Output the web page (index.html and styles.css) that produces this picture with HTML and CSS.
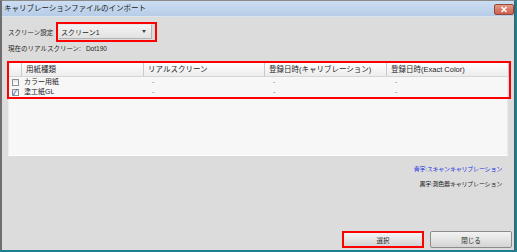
FILE: index.html
```html
<!DOCTYPE html>
<html lang="ja">
<head>
    <meta charset="UTF-8">
    <title>キャリブレーションファイルのインポート</title>
    <link rel="stylesheet" href="styles.css">
</head>
<body>
    <div class="window">
        <div class="titlebar">
            <span class="title">キャリブレーションファイルのインポート</span>
            <button class="close-btn">
                <svg width="8" height="7" viewBox="0 0 8 7"><path d="M1.5 1 L6.5 6 M6.5 1 L1.5 6" stroke="#fff" stroke-width="1.5"/></svg>
            </button>
        </div>

        <div class="content">
            <div class="setting-row">
                <span class="label">スクリーン設定</span>
                <span class="mark mark-select">
                    <span class="select">
                        <span class="select-text">スクリーン1</span>
                        <span class="arrow"></span>
                    </span>
                </span>
            </div>

            <div class="current">現在のリアルスクリーン:<span class="current-value">Dot190</span></div>

            <div class="panel">
                <div class="mark mark-table">
                    <div class="grid head">
                        <div class="hcell"></div>
                        <div class="hcell">用紙種類</div>
                        <div class="hcell">リアルスクリーン</div>
                        <div class="hcell">登録日時(キャリブレーション)</div>
                        <div class="hcell">登録日時(Exact Color)</div>
                    </div>
                    <div class="grid row">
                        <div class="cell check-cell"><span class="checkbox"></span></div>
                        <div class="cell name">カラー用紙</div>
                        <div class="cell dash">-</div>
                        <div class="cell dash">-</div>
                        <div class="cell dash">-</div>
                    </div>
                    <div class="grid row">
                        <div class="cell check-cell"><span class="checkbox checked">✓</span></div>
                        <div class="cell name">塗工紙GL</div>
                        <div class="cell dash">-</div>
                        <div class="cell dash">-</div>
                        <div class="cell dash">-</div>
                    </div>
                </div>
            </div>

            <div class="notes">
                <div class="note note-blue">青字:スキャンキャリブレーション</div>
                <div class="note">黒字:測色器キャリブレーション</div>
            </div>

            <div class="buttons">
                <button class="btn btn-marked">選択</button>
                <button class="btn">閉じる</button>
            </div>
        </div>
    </div>
</body>
</html>
```

FILE: styles.css
```css
body {
    margin: 0;
    background-color: #1f7f91;
    font-family: "Liberation Sans", "Noto Sans CJK JP", sans-serif;
    color: #1e1e1e;
}

.window {
    width: 512px;
    height: 249px;
    border-top: 1px solid #8a8a8a;
    border-left: 2px solid #6e6e6e;
    border-right: 1px solid #4d5a60;
    background-color: #dcdcdc;
    display: flex;
    flex-direction: column;
}

/* Title bar */
.titlebar {
    height: 15px;
    background: linear-gradient(#cddef2, #b6cce7);
    border-bottom: 1px solid #d9e4f1;
    display: flex;
    align-items: center;
    justify-content: space-between;
    padding: 0 0 0 2px;
}

.title {
    font-size: 7.5px;
    color: #1a1a1a;
    line-height: 15px;
}

.close-btn {
    width: 20px;
    height: 11px;
    margin: 2px 0 0 0;
    padding: 0;
    border: 1px solid #94473a;
    border-radius: 2px;
    background: linear-gradient(#e39a88, #cc604b);
    display: flex;
    align-items: center;
    justify-content: center;
}

/* Content */
.content {
    flex: 1;
    padding: 5px 6px 0 6px;
    display: flex;
    flex-direction: column;
}

.setting-row {
    display: flex;
    align-items: center;
    height: 20px;
}

.label {
    font-size: 6.5px;
    width: 48px;
}

.mark {
    border: 2px solid #ff0000;
}

.mark-select {
    display: flex;
    height: 16px;
    padding-right: 3px;
}

.select {
    width: 94px;
    height: 15px;
    border: 1px solid #b4b4b4;
    border-left-color: #e8e8e8;
    border-top-color: #e8e8e8;
    background: linear-gradient(#f3f3f3, #e2e2e2);
    display: flex;
    align-items: center;
    justify-content: space-between;
    padding: 0 5px 0 2px;
    box-sizing: border-box;
}

.select-text {
    font-size: 7px;
}

.arrow {
    width: 0;
    height: 0;
    border-left: 2.5px solid transparent;
    border-right: 2.5px solid transparent;
    border-top: 3px solid #444;
}

.current {
    font-size: 6.5px;
    margin-top: 2px;
    line-height: 10px;
}

.current-value {
    margin-left: 5px;
}

/* List panel */
.panel {
    margin-top: 8px;
    height: 92px;
    background-color: #f7f7f7;
    border: 1px solid #ebebeb;
    border-bottom-color: #fdfdfd;
}

.mark-table {
    margin: -2px -4px 0 -2px;
}

.grid {
    display: grid;
    grid-template-columns: 13px 122px 121px 122px 1fr;
}

.head {
    height: 14px;
    background: linear-gradient(#ffffff, #ececec);
    border-bottom: 1px solid #d6d6d6;
    box-sizing: border-box;
}

.hcell {
    font-size: 7.5px;
    line-height: 13px;
    padding-left: 4px;
    border-right: 1px solid #c9c9c9;
    white-space: nowrap;
}

.hcell:first-child {
    padding-left: 0;
}

.row {
    height: 10px;
}

.cell {
    font-size: 7px;
    line-height: 10px;
    white-space: nowrap;
}

.check-cell {
    display: flex;
    align-items: center;
    padding-left: 3px;
}

.checkbox {
    width: 7px;
    height: 7px;
    border: 1px solid #8f8f8f;
    background: linear-gradient(#e6e6e6, #ffffff);
    box-sizing: border-box;
    font-size: 8px;
    line-height: 5px;
    color: #2a4fb8;
    text-indent: -1px;
}

.name {
    padding-left: 2px;
}

.dash {
    padding-left: 8px;
    color: #777;
}

/* Notes */
.notes {
    margin-top: 8px;
    padding-right: 6px;
    display: flex;
    flex-direction: column;
    align-items: flex-end;
    gap: 5px;
}

.note {
    font-size: 6px;
    letter-spacing: -0.2px;
    line-height: 10px;
}

.note-blue {
    color: #2030e0;
}

/* Buttons */
.buttons {
    margin-top: auto;
    margin-right: -4px;
    margin-bottom: 2px;
    display: flex;
    justify-content: flex-end;
    gap: 6px;
}

.btn {
    width: 82px;
    height: 17px;
    padding: 0;
    font-family: inherit;
    font-size: 6.5px;
    color: #1e1e1e;
    border: 1px solid #8c8c8c;
    border-radius: 2px;
    background: linear-gradient(#f4f4f4, #d4d4d4);
}

.btn-marked {
    border: 2px solid #ff0000;
    border-radius: 0;
}
```
